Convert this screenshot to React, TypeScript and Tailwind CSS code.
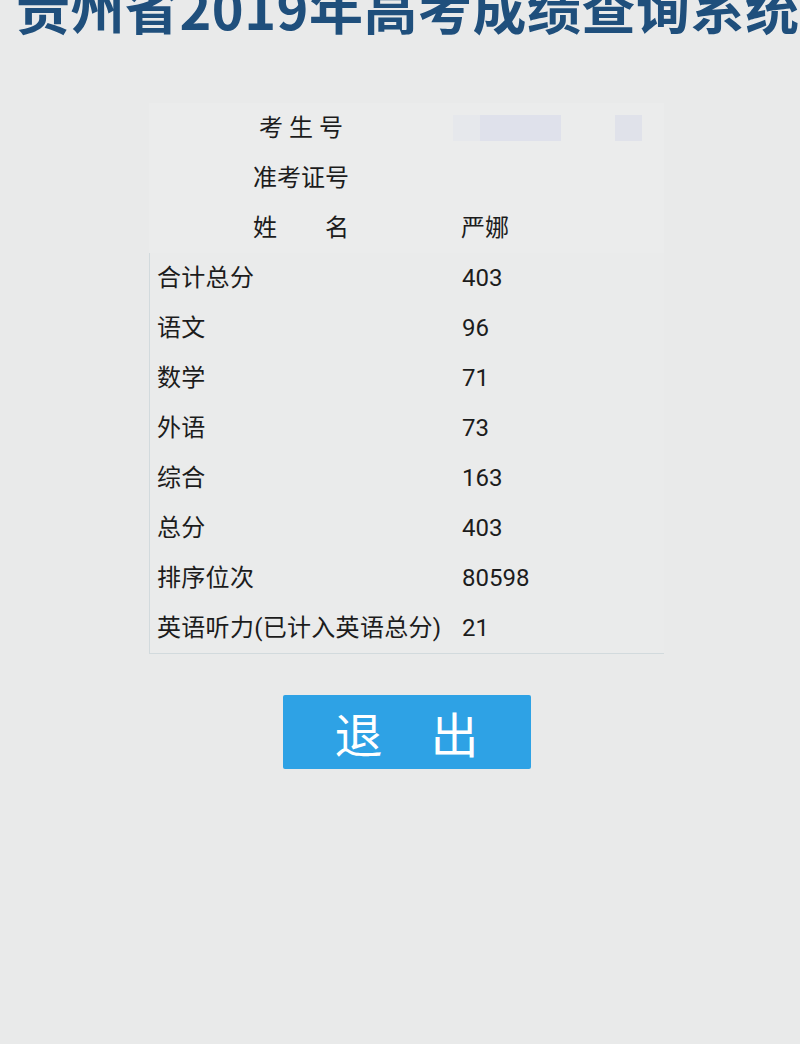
const rows: [string, string][] = [
  ['合计总分', '403'],
  ['语文', '96'],
  ['数学', '71'],
  ['外语', '73'],
  ['综合', '163'],
  ['总分', '403'],
  ['排序位次', '80598'],
  ['英语听力(已计入英语总分)', '21'],
];

export default function App() {
  return (
    <div
      className="w-[800px] h-[1044px] overflow-hidden bg-[#e9eaea] text-[#1c1c1c]"
      style={{ fontFamily: 'Roboto, "Noto Sans CJK SC", sans-serif' }}
    >
      <h1
        className="mt-[-20px] ml-[16px] whitespace-nowrap text-[54px] leading-[54px] font-bold text-[#1f4f7c] tracking-[0.5px]"
        style={{ fontFamily: '"Noto Sans CJK SC", sans-serif' }}
      >
        贵州省2019年高考成绩查询系统
      </h1>

      <div className="mt-[69px] ml-[149px] w-[515px]">
        <div className="bg-[#ebecec]">
          <div className="grid grid-cols-[304px_211px] h-[50px] items-center text-[24px]">
            <div className="text-center">考 生 号</div>
            <div className="flex items-center h-[26px]">
              <div className="w-[27px] h-[26px] bg-[#e6e8ec]" />
              <div className="w-[81px] h-[26px] bg-[#dfe1eb]" />
              <div className="w-[54px]" />
              <div className="w-[27px] h-[26px] bg-[#e0e2ea]" />
            </div>
          </div>
          <div className="grid grid-cols-[304px_211px] h-[50px] items-center text-[24px]">
            <div className="text-center">准考证号</div>
            <div className="pl-[8px]" />
          </div>
          <div className="grid grid-cols-[304px_211px] h-[50px] items-center text-[24px]">
            <div className="text-center">姓{'\u3000\u3000'}名</div>
            <div className="pl-[8px]">严娜</div>
          </div>
        </div>

        <div className="border-l border-b border-[#d2dadd] bg-[#eaebeb]">
          {rows.map(([k, v]) => (
            <div key={k} className="grid grid-cols-[304px_211px] h-[50px] items-center text-[24px]">
              <div className="pl-[7px] whitespace-nowrap tracking-[0.3px]">{k}</div>
              <div className="pl-[8px]">{v}</div>
            </div>
          ))}
        </div>

        <div className="flex justify-center mt-[41px]">
          <button
            className="w-[248px] h-[74px] rounded-[2px] bg-[#2ea2e5] text-white text-[48px] leading-none"
            style={{ fontFamily: '"Noto Sans CJK SC", sans-serif', fontWeight: 400 }}
          >
            退{'\u3000'}出
          </button>
        </div>
      </div>
    </div>
  );
}
